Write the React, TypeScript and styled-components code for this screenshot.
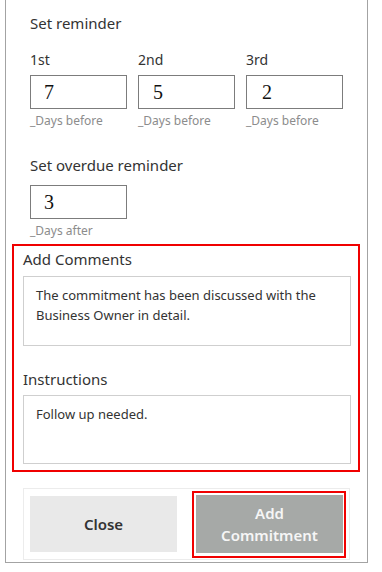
import React from "react";
import styled, { createGlobalStyle } from "styled-components";

const Global = createGlobalStyle`
  html, body { margin: 0; padding: 0; background: #ffffff; }
  body { font-family: "Noto Sans", "Open Sans", sans-serif; color: #333333; }
  * { box-sizing: border-box; }
`;

const Frame = styled.div`
  margin-left: 5px;
  width: 363px;
  height: 563px;
  border: 1px solid #a3a3a3;
  border-top: none;
  display: flex;
  flex-direction: column;
`;

const Section = styled.section<{ $top: number }>`
  padding-left: 24px;
  margin-top: ${(p) => p.$top}px;
  display: flex;
  flex-direction: column;
`;

const Title = styled.div`
  font-size: 15px;
  line-height: 20px;
  color: #333333;
  height: 20px;
`;

const Fields = styled.div<{ $top: number }>`
  display: flex;
  gap: 11px;
  margin-top: ${(p) => p.$top}px;
`;

const Field = styled.div`
  width: 97px;
  display: flex;
  flex-direction: column;
`;

const FieldLabel = styled.div`
  font-size: 14px;
  line-height: 20px;
  color: #333333;
  margin-bottom: 5px;
`;

const NumberBox = styled.input<{ $pad: number }>`
  width: 97px;
  height: 34px;
  border: 1px solid #7c7c7c;
  border-radius: 0;
  padding: 0 0 0 ${(p) => p.$pad}px;
  font-family: "Liberation Serif", "DejaVu Serif", "Times New Roman", serif;
  font-size: 20px;
  color: #111111;
  background: #ffffff;
  outline: none;
`;

const Hint = styled.div`
  font-size: 12px;
  line-height: 16px;
  color: #8c8c8c;
  margin-top: 4px;
`;

const Highlight = styled.div`
  margin: 5px 0 0 6px;
  width: 348px;
  border: 2px solid #f00000;
  padding: 3px 7px 6px 9px;
  display: flex;
  flex-direction: column;
`;

const BlockTitle = styled.div<{ $top: number }>`
  font-size: 15px;
  line-height: 20px;
  color: #333333;
  margin-top: ${(p) => p.$top}px;
`;

const TextBox = styled.textarea<{ $h: number; $top: number }>`
  display: block;
  width: 328px;
  height: ${(p) => p.$h}px;
  margin-top: ${(p) => p.$top}px;
  border: 1px solid #cfcfcf;
  border-radius: 0;
  padding: 8px 12px 0 12px;
  font-family: "Noto Sans", "Open Sans", sans-serif;
  font-size: 13px;
  line-height: 20px;
  color: #333333;
  resize: none;
  overflow: hidden;
  outline: none;
  background: #ffffff;
`;

const Actions = styled.div`
  margin: 16px 0 0 17px;
  width: 327px;
  height: 72px;
  border: 1px solid #ececec;
  display: flex;
  align-items: center;
  padding-left: 6px;
  gap: 15px;
`;

const CloseButton = styled.button`
  width: 147px;
  height: 56px;
  border: none;
  background: #e9e9e9;
  font-family: "Noto Sans", "Open Sans", sans-serif;
  font-size: 15px;
  font-weight: 600;
  color: #333333;
  padding: 0;
`;

const Outline = styled.div`
  border: 2px solid #f00000;
  padding: 2px 1px 3px 2px;
  display: flex;
`;

const PrimaryButton = styled.button`
  width: 147px;
  height: 58px;
  border: none;
  background: #a6a9a7;
  font-family: "Noto Sans", "Open Sans", sans-serif;
  font-size: 15px;
  font-weight: 600;
  line-height: 22px;
  color: #f6f6f6;
  padding: 0;
`;

const reminders = [
  { label: "1st", value: "7", pad: 13 },
  { label: "2nd", value: "5", pad: 14 },
  { label: "3rd", value: "2", pad: 15 },
];

export default function App() {
  return (
    <>
      <Global />
      <Frame>
        <Section $top={13}>
          <Title>Set reminder</Title>
          <Fields $top={17}>
            {reminders.map((r) => (
              <Field key={r.label}>
                <FieldLabel>{r.label}</FieldLabel>
                <NumberBox readOnly value={r.value} $pad={r.pad} />
                <Hint>_Days before</Hint>
              </Field>
            ))}
          </Fields>
        </Section>
        <Section $top={26}>
          <Title>Set overdue reminder</Title>
          <Fields $top={10}>
            <Field>
              <NumberBox readOnly value="3" $pad={13} />
              <Hint>_Days after</Hint>
            </Field>
          </Fields>
        </Section>
        <Highlight>
          <BlockTitle $top={0}>Add Comments</BlockTitle>
          <TextBox
            readOnly
            $h={70}
            $top={7}
            value={"The commitment has been discussed with the Business Owner in detail."}
          />
          <BlockTitle $top={23}>Instructions</BlockTitle>
          <TextBox readOnly $h={69} $top={6} value={"Follow up needed."} />
        </Highlight>
        <Actions>
          <CloseButton>Close</CloseButton>
          <Outline>
            <PrimaryButton>
              Add
              <br />
              Commitment
            </PrimaryButton>
          </Outline>
        </Actions>
      </Frame>
    </>
  );
}
